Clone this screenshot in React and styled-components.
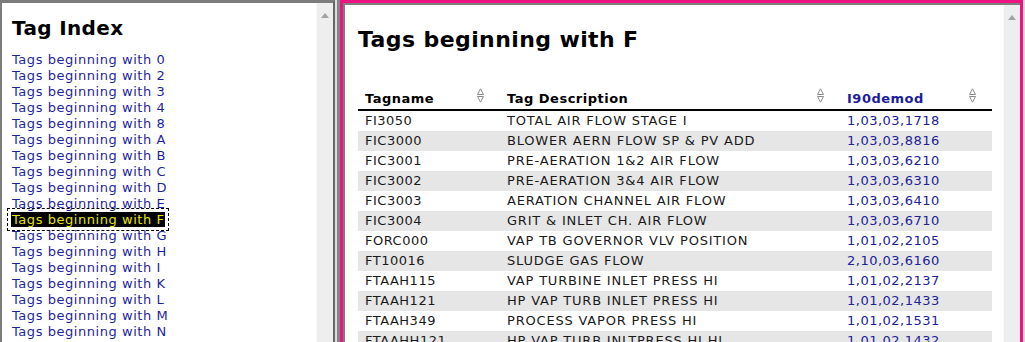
import React from "react";
import styled, { createGlobalStyle } from "styled-components";

const letters = [
  "0", "2", "3", "4", "8", "A", "B", "C", "D", "E", "F", "G", "H", "I",
  "K", "L", "M", "N",
];

const rows = [
  ["FI3050", "TOTAL AIR FLOW STAGE I", "1,03,03,1718"],
  ["FIC3000", "BLOWER AERN FLOW SP & PV ADD", "1,03,03,8816"],
  ["FIC3001", "PRE-AERATION 1&2 AIR FLOW", "1,03,03,6210"],
  ["FIC3002", "PRE-AERATION 3&4 AIR FLOW", "1,03,03,6310"],
  ["FIC3003", "AERATION CHANNEL AIR FLOW", "1,03,03,6410"],
  ["FIC3004", "GRIT & INLET CH. AIR FLOW", "1,03,03,6710"],
  ["FORC000", "VAP TB GOVERNOR VLV POSITION", "1,01,02,2105"],
  ["FT10016", "SLUDGE GAS FLOW", "2,10,03,6160"],
  ["FTAAH115", "VAP TURBINE INLET PRESS HI", "1,01,02,2137"],
  ["FTAAH121", "HP VAP TURB INLET PRESS HI", "1,01,02,1433"],
  ["FTAAH349", "PROCESS VAPOR PRESS HI", "1,01,02,1531"],
  ["FTAAHH121", "HP VAP TURB INLTPRESS HI HI", "1,01,02,1432"],
];

const columns = [
  { label: "Tagname", width: 142 },
  { label: "Tag Description", width: 340 },
  { label: "I90demod", width: 152, link: true },
];

const SortIcon = () => (
  <SortSvg width="7" height="15" viewBox="0 0 7 15">
    <polygon points="3.5,0.8 6.5,6.5 0.5,6.5" fill="none" stroke="#8c8c8c" strokeWidth="1" />
    <polygon points="0.5,8.5 6.5,8.5 3.5,14.2" fill="none" stroke="#8c8c8c" strokeWidth="1" />
  </SortSvg>
);

const Scroll = () => (
  <Scrollbar>
    <svg width="8" height="5" viewBox="0 0 8 5">
      <polygon points="4,0 8,5 0,5" fill="#a3a3a3" />
    </svg>
  </Scrollbar>
);

export default function App() {
  return (
    <>
      <GlobalStyle />
      <Window>
        {/* left frame: tag index */}
        <LeftFrame>
          <Pane $pad="13px 0 0 10px">
            <IndexTitle>Tag Index</IndexTitle>
            <LinkList>
              {letters.map((l) => (
                <LinkLine key={l}>
                  <TagLink href="#" $active={l === "F"}>
                    Tags beginning with {l}
                  </TagLink>
                </LinkLine>
              ))}
            </LinkList>
          </Pane>
          <Scroll />
        </LeftFrame>
        <Splitter />
        {/* right frame: tag table */}
        <RightFrame>
          <Inset>
            <Pane $pad="22px 0 0 13px">
              <PageTitle>Tags beginning with F</PageTitle>
              <Table>
                <thead>
                  <tr>
                    {columns.map((c) => (
                      <HeadCell key={c.label} style={{ width: c.width }}>
                        <HeadInner>
                          <HeadLabel $link={c.link}>{c.label}</HeadLabel>
                          <SortIcon />
                        </HeadInner>
                      </HeadCell>
                    ))}
                  </tr>
                </thead>
                <tbody>
                  {rows.map((r, i) => (
                    <Row key={r[0]} $striped={i % 2 === 1}>
                      <Cell>{r[0]}</Cell>
                      <Cell $wide>{r[1]}</Cell>
                      <Cell $number>{r[2]}</Cell>
                    </Row>
                  ))}
                </tbody>
              </Table>
            </Pane>
            <Scroll />
          </Inset>
        </RightFrame>
      </Window>
    </>
  );
}

// - Styled Components - //
const GlobalStyle = createGlobalStyle`
  html, body {
    margin: 0;
    padding: 0;
    overflow: hidden;
    background: #d6d6d6;
  }
  body {
    font-family: "DejaVu Sans", "Liberation Sans", sans-serif;
  }
`;

const Window = styled.div`
  display: flex;
  width: 1025px;
  height: 342px;
  overflow: hidden;
  background: #d6d6d6;
`;

const LeftFrame = styled.div`
  display: flex;
  flex-shrink: 0;
  width: 335px;
  box-sizing: border-box;
  border-top: 3px solid #7c7c7c;
  border-left: 2px solid #7c7c7c;
  border-right: 2px solid #666;
  background: #fff;
`;

const Splitter = styled.div`
  width: 5px;
  flex-shrink: 0;
  box-sizing: border-box;
  border-left: 2px solid #dcdcdc;
  background: #858585;
`;

const RightFrame = styled.div`
  display: flex;
  flex-shrink: 0;
  width: 683px;
  box-sizing: border-box;
  border: 3px solid #ee1282;
  border-bottom: none;
`;

const Inset = styled.div`
  display: flex;
  flex: 1;
  min-width: 0;
  border-top: 2px solid #7e7e7e;
  border-left: 2px solid #7e7e7e;
  background: #fff;
`;

const Pane = styled.div`
  flex: 1;
  min-width: 0;
  padding: ${(p) => p.$pad};
  overflow: hidden;
  background: #fff;
`;

const Scrollbar = styled.div`
  width: 17px;
  flex-shrink: 0;
  box-sizing: border-box;
  display: flex;
  justify-content: center;
  align-items: flex-start;
  padding-top: 10px;
  background: #eeeeee;
  border-left: 1px solid #f9f9f9;
`;

const IndexTitle = styled.h1`
  margin: 0;
  font-size: 20px;
  line-height: 24px;
  font-weight: bold;
  letter-spacing: 0.35px;
  color: #000;
`;

const LinkList = styled.div`
  margin-top: 11px;
`;

const LinkLine = styled.div`
  height: 16px;
  line-height: 16px;
  white-space: nowrap;
`;

const TagLink = styled.a`
  font-size: 13px;
  letter-spacing: 0.55px;
  text-decoration: none;
  color: ${(p) => (p.$active ? "#e6e600" : "#1f1fa0")};
  background: ${(p) => (p.$active ? "#000" : "transparent")};
  outline: ${(p) => (p.$active ? "1px dashed #000" : "none")};
  outline-offset: 3px;
  padding: 0 1px;
  margin-left: -1px;
`;

const PageTitle = styled.h1`
  margin: 0 0 36px;
  font-size: 22px;
  line-height: 26px;
  font-weight: bold;
  letter-spacing: 0.4px;
  color: #000;
`;

const Table = styled.table`
  width: 634px;
  table-layout: fixed;
  border-collapse: collapse;
  font-size: 13px;
  letter-spacing: 0.5px;
`;

const HeadCell = styled.th`
  box-sizing: border-box;
  height: 20px;
  padding: 0 16px 0 7px;
  border-bottom: 2px solid #000;
  text-align: left;
  vertical-align: top;
`;

const HeadInner = styled.div`
  display: flex;
  justify-content: space-between;
  align-items: flex-start;
`;

const HeadLabel = styled.span`
  line-height: 20px;
  font-weight: bold;
  color: ${(p) => (p.$link ? "#1c1c9c" : "#000")};
`;

const SortSvg = styled.svg`
  display: block;
  margin-top: -1px;
`;

const Row = styled.tr`
  background: ${(p) => (p.$striped ? "#e6e6e6" : "#fff")};
`;

const Cell = styled.td`
  box-sizing: border-box;
  height: 20px;
  padding: 0 7px;
  line-height: 20px;
  white-space: nowrap;
  overflow: hidden;
  letter-spacing: ${(p) => (p.$wide ? "0.8px" : "0.5px")};
  color: ${(p) => (p.$number ? "#21219a" : "#1a1a1a")};
`;
